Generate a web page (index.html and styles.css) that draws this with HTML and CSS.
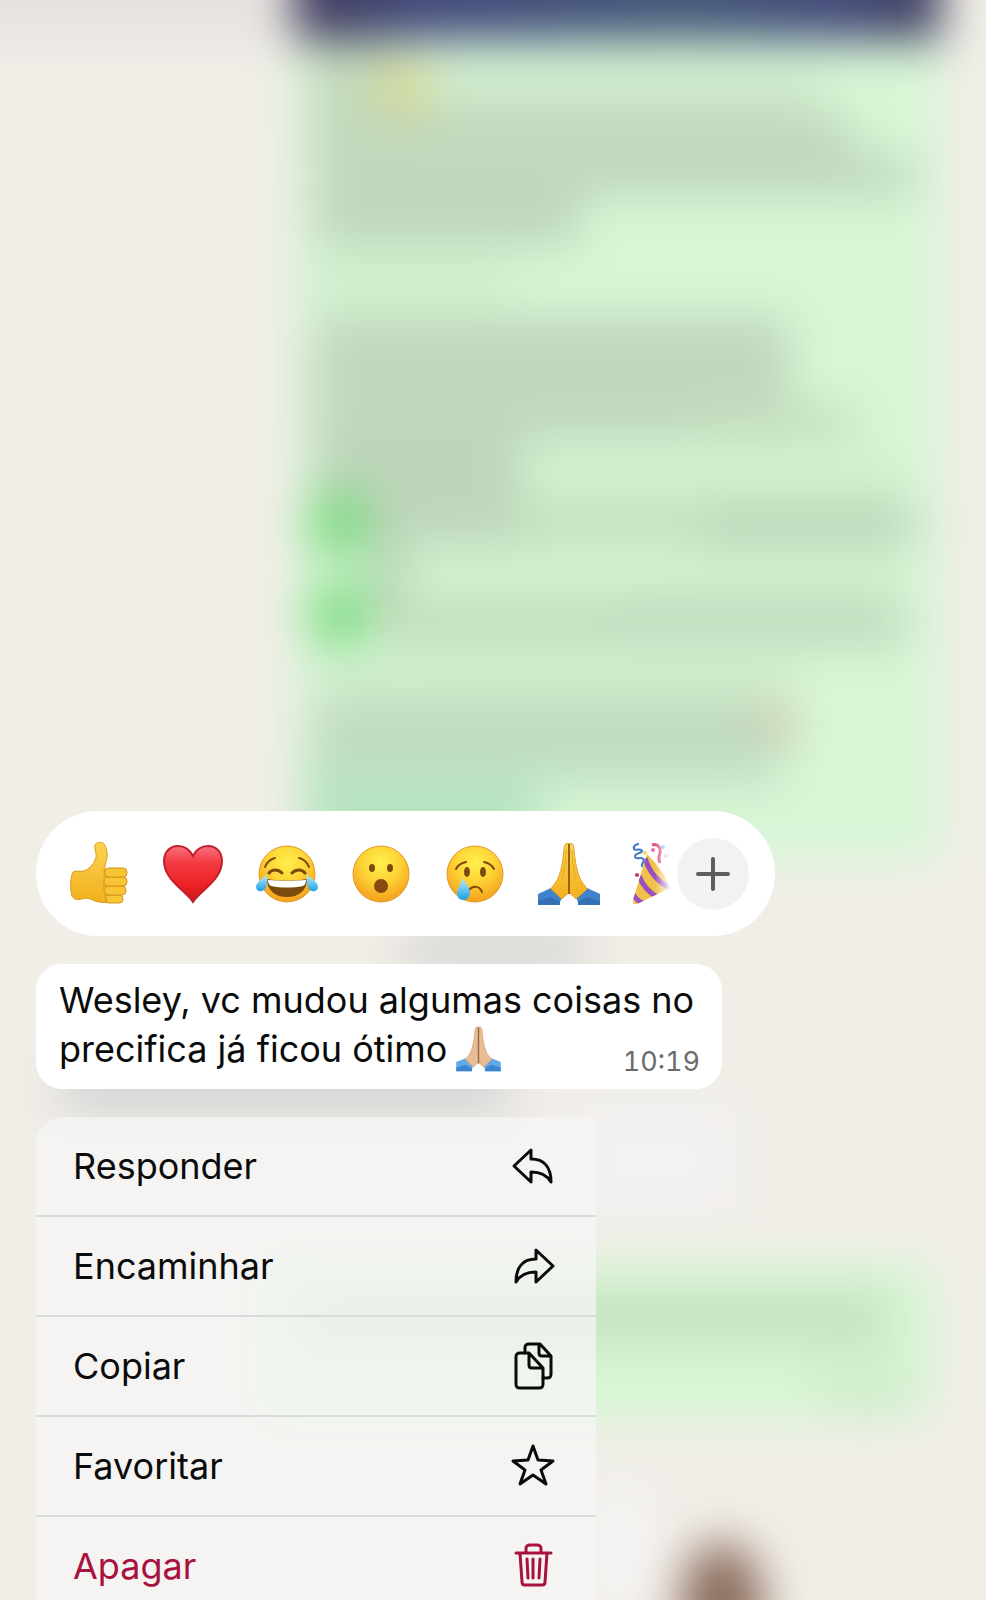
FILE: index.html
```html
<!DOCTYPE html>
<html lang="pt-BR">
  <head>
    <meta charset="utf-8">
    <meta name="viewport" content="width=device-width, initial-scale=1">
    <title>Conversa</title>
    <link rel="stylesheet" href="styles.css">
  </head>
  <body>
    <!-- blurred conversation behind the menu -->
    <svg class="backdrop" viewBox="0 0 986 1600" preserveAspectRatio="none" aria-hidden="true">
      <defs>
        <filter id="soft" filterUnits="userSpaceOnUse" x="-100" y="-100" width="1186" height="1800" color-interpolation-filters="sRGB"><feGaussianBlur stdDeviation="23"/></filter>
        <linearGradient id="photo" x1="0" x2="1" y1="0" y2="0">
          <stop offset="0" stop-color="#40385a"/>
          <stop offset=".2" stop-color="#434a7c"/>
          <stop offset=".6" stop-color="#44587a"/>
          <stop offset=".85" stop-color="#434a7a"/>
          <stop offset="1" stop-color="#403c5c"/>
        </linearGradient>
      </defs>
      <rect width="986" height="1600" fill="#f1eee8"/>
      <g filter="url(#soft)">
        <rect x="-100" y="-100" width="1186" height="1800" fill="#f1eee8"/>
        <rect x="-100" y="-100" width="390" height="140" fill="#e6e3df"/>
        <rect x="294" y="-100" width="650" height="962" rx="20" fill="#d8f6d6"/>
        <rect x="310" y="30" width="80" height="100" fill="#c4dabc"/>
        <rect x="400" y="80" width="420" height="36" fill="#cbe3c6"/>
        <rect x="314" y="116" width="540" height="50" fill="#c0d7bb"/>
        <rect x="314" y="155" width="600" height="42" fill="#c0d8bc"/>
        <rect x="314" y="190" width="266" height="56" fill="#bed6ba"/>
        <rect x="310" y="260" width="200" height="40" fill="#cfedcc"/>
        <rect x="314" y="316" width="476" height="90" fill="#c0d7bb"/>
        <rect x="316" y="395" width="434" height="44" fill="#bfd7bb"/>
        <rect x="700" y="405" width="155" height="34" fill="#c3dcbe"/>
        <rect x="314" y="425" width="205" height="84" fill="#bdd5b9"/>
        <rect x="520" y="450" width="380" height="50" fill="#d2f0cf"/>
        <rect x="370" y="500" width="160" height="44" fill="#bdd5b9"/>
        <rect x="520" y="504" width="200" height="36" fill="#c3dcbe"/>
        <rect x="700" y="502" width="215" height="44" fill="#bcd5b8"/>
        <rect x="420" y="552" width="480" height="40" fill="#d1efce"/>
        <rect x="370" y="540" width="36" height="70" fill="#b4d4b4"/>
        <rect x="380" y="602" width="230" height="42" fill="#c0dabb"/>
        <rect x="610" y="600" width="295" height="46" fill="#bfd8bb"/>
        <rect x="310" y="660" width="480" height="36" fill="#cfedcd"/>
        <rect x="314" y="700" width="480" height="54" fill="#c0d9bc"/>
        <rect x="306" y="750" width="470" height="36" fill="#c0e2c3"/>
        <rect x="306" y="780" width="230" height="70" fill="#b7e3c0"/>
        <rect x="294" y="-100" width="648" height="140" fill="url(#photo)"/>
        <rect x="310" y="494" width="58" height="60" fill="#7ed983"/>
        <rect x="310" y="586" width="58" height="58" fill="#7edc83"/>
        <circle cx="404" cy="88" r="26" fill="#dad58c"/>
        <circle cx="776" cy="724" r="22" fill="#d4ccb8"/>
        <rect x="400" y="930" width="190" height="40" rx="20" fill="#d5d4d2"/>
        <rect x="60" y="1056" width="450" height="56" fill="#d4d4d5"/>
        <rect x="580" y="1110" width="150" height="100" fill="#f2f1f3"/>
        <rect x="260" y="1262" width="674" height="158" rx="20" fill="#d6f6d3"/>
        <rect x="300" y="1292" width="590" height="54" fill="#c6e1c2"/>
        <rect x="820" y="1370" width="90" height="40" fill="#cfebca"/>
        <rect x="590" y="1490" width="60" height="110" fill="#f5f4f4"/>
        <ellipse cx="722" cy="1606" rx="42" ry="64" fill="#8b6c5c"/>
      </g>
    </svg>

    <main class="overlay">
      <section class="reactions" aria-label="Reações">
        <div class="reaction-list">
          <button type="button" aria-label="Gostei">
            <svg class="emoji" viewBox="0 0 64 64" aria-hidden="true">
              <defs>
                <linearGradient id="skin" x1="0" x2="0" y1="0" y2="1">
                  <stop offset="0" stop-color="#fcd34f"/>
                  <stop offset="1" stop-color="#f2b01e"/>
                </linearGradient>
              </defs>
              <path d="M33 0c-4 0-6 3-5 7 1 5 2 7 0 11-2 5-6 9-11 11-4 1-8-1-11 1-3 6-3 18-1 24 2 4 6 4 10 3 5-2 8 0 13 2 6 2 12 2 18 1l6-29-14-3c-1-5 3-10 2-18-1-6-3-10-7-10z" fill="url(#skin)" stroke="#dd9b20"/>
              <g fill="#f8c535" stroke="#d6921d">
                <rect x="38" y="53" width="18" height="8" rx="4"/>
                <rect x="37" y="44" width="22" height="9" rx="4"/>
                <rect x="37" y="35" width="23" height="9" rx="4"/>
                <rect x="38" y="26" width="22" height="9" rx="4"/>
              </g>
              <path d="M37 27c3 7-2 11 0 18 1 4 1 9 3 15" fill="none" stroke="#e6a526" stroke-width="2"/>
            </svg>
          </button>
          <button type="button" aria-label="Amei">
            <svg class="emoji" viewBox="0 0 64 64" aria-hidden="true">
              <defs>
                <linearGradient id="heart" x1="0" x2="0" y1="0" y2="1">
                  <stop offset="0" stop-color="#f97080"/>
                  <stop offset=".3" stop-color="#f33b42"/>
                  <stop offset=".7" stop-color="#ed2226"/>
                  <stop offset="1" stop-color="#c8161f"/>
                </linearGradient>
              </defs>
              <path d="M32 60C25 49 3 38 3 19 3 9 10 4 17 4c7 0 12 4 15 10 3-6 8-10 15-10 7 0 14 5 14 15 0 19-22 30-29 41z" fill="url(#heart)" stroke="#c01e2b" stroke-width="2"/>
            </svg>
          </button>
          <button type="button" aria-label="Rindo">
            <svg class="emoji" viewBox="0 0 64 64" aria-hidden="true">
              <defs>
                <radialGradient id="face" cx=".5" cy=".3" r=".7">
                  <stop offset="0" stop-color="#fff04d"/>
                  <stop offset=".5" stop-color="#fdd235"/>
                  <stop offset="1" stop-color="#f59f1c"/>
                </radialGradient>
                <linearGradient id="tear" x1="0" x2="0" y1="0" y2="1">
                  <stop offset="0" stop-color="#b7ecfb"/>
                  <stop offset="1" stop-color="#1f9fe6"/>
                </linearGradient>
              </defs>
              <circle cx="32" cy="32" r="28" fill="url(#face)" stroke="#dd982a"/>
              <path d="M10 25c2-5 6-8 10-9M44 16c5 1 8 4 10 9" fill="none" stroke="#7c4a0c" stroke-width="2" stroke-linecap="round"/>
              <path d="M14 31c3-4 9-4 13 0M37 31c4-4 10-4 13 0" fill="none" stroke="#7c4a0c" stroke-width="3" stroke-linecap="round"/>
              <path d="M12 37c12 2 28 2 40 0 0 12-9 18-20 18s-20-6-20-18z" fill="#7c4a0c"/>
              <path d="M13 38c12 1 26 1 38 0 0 3-1 5-3 6-10 2-22 2-32 0-2-1-3-3-3-6z" fill="#fff"/>
              <path d="M12 33C6 37 1 41 1 45c0 3 3 5 6 4 5-1 6-9 5-16zM52 33c6 4 11 8 11 12 0 3-3 5-6 4-5-1-6-9-5-16z" fill="url(#tear)"/>
            </svg>
          </button>
          <button type="button" aria-label="Surpresa">
            <svg class="emoji" viewBox="0 0 64 64" aria-hidden="true">
              <circle cx="32" cy="32" r="28" fill="url(#face)" stroke="#dd982a"/>
              <ellipse cx="23" cy="26" rx="3" ry="4" fill="#7c4a0c"/>
              <ellipse cx="41" cy="26" rx="3" ry="4" fill="#7c4a0c"/>
              <ellipse cx="32" cy="44" rx="7" ry="7" fill="#87490d"/>
            </svg>
          </button>
          <button type="button" aria-label="Triste">
            <svg class="emoji" viewBox="0 0 64 64" aria-hidden="true">
              <circle cx="32" cy="32" r="28" fill="url(#face)" stroke="#dd982a"/>
              <ellipse cx="24" cy="30" rx="3" ry="5" fill="#7c4a0c"/>
              <ellipse cx="40" cy="30" rx="3" ry="5" fill="#7c4a0c"/>
              <path d="M13 27c2-4 5-6 10-7M41 20c5 1 8 3 10 7M26 48c4-5 11-4 13 2" fill="none" stroke="#7c4a0c" stroke-width="2" stroke-linecap="round"/>
              <path d="M20 36c3 6 7 10 7 15 0 4-3 7-7 7s-6-3-6-7c0-5 4-9 6-15z" fill="url(#tear)"/>
            </svg>
          </button>
          <button type="button" aria-label="Obrigado">
            <svg class="emoji" viewBox="0 0 64 64" aria-hidden="true">
              <path d="M1 52l13-6 11 9-3 8H1zM63 52l-13-6-11 9 3 8h21z" fill="#3f83cd"/>
              <path d="M1 59l13-4 9 5v3H1zM63 59l-13-4-9 5v3h22z" fill="#356fb4"/>
              <path d="M32 2c-3-2-5 1-5 6-1 9-2 18-5 26-2 6-6 9-8 13l11 10c3-3 5-5 7-6 2 1 4 3 7 6l11-10c-2-4-6-7-8-13-3-8-4-17-5-26 0-5-2-8-5-6z" fill="url(#skin)" stroke="#e2a023"/>
              <path d="M32 2v50" stroke="#99610d" stroke-width="2"/>
              <path d="M29 8c0 12-2 22-4 29M35 8c0 12 2 22 4 29" fill="none" stroke="#e9a520"/>
            </svg>
          </button>
          <button type="button" aria-label="Festa">
            <svg class="emoji" viewBox="0 0 64 64" aria-hidden="true">
              <defs>
                <clipPath id="cone"><path d="M16 12c8 8 19 21 23 34L6 62c-3 1-5-1-4-4z"/></clipPath>
              </defs>
              <g clip-path="url(#cone)">
                <rect width="64" height="64" fill="#f0c24b"/>
                <path d="M14 16c4 14 14 26 28 31M8 34c4 10 10 17 20 22M2 52c2 4 6 8 12 10" fill="none" stroke="#9a4fc0" stroke-width="5"/>
              </g>
              <path d="M8 2c-3 0-6 2-5 5 1 2 7-1 8 2 1 2-8 2-7 6 1 3 8-1 9 3 0 2-3 3-2 7" fill="none" stroke="#3b76c9" stroke-width="2"/>
              <path d="M21 3c7-2 9 4 8 8-1 4-2 5 0 10" fill="none" stroke="#e0527e" stroke-width="3"/>
              <circle cx="32" cy="5" r="2" fill="#6bb0e6"/>
              <circle cx="35" cy="14" r="2" fill="#b8a5ee"/>
              <circle cx="6" cy="33" r="2" fill="#c93a55"/>
              <circle cx="14" cy="11" r="2" fill="#f4d95c"/>
              <circle cx="22" cy="8" r="2" fill="#ef6fa0"/>
              <circle cx="48" cy="24" r="2" fill="#e0527e"/>
            </svg>
          </button>
        </div>
        <button type="button" class="more" aria-label="Mais reações">
          <svg viewBox="0 0 72 72" aria-hidden="true">
            <path d="M36 21v30M21 36h30"/>
          </svg>
        </button>
      </section>

      <article class="message">
        <p>Wesley, vc mudou algumas coisas no</p>
        <div class="last-line">
          <p>precifica já ficou ótimo
            <svg class="pray" viewBox="0 0 64 64" role="img" aria-label="Mãos juntas">
              <path d="M1 50l13-5 11 9-3 9H1zM63 50l-13-5-11 9 3 9h21z" fill="#62a9ea"/>
              <path d="M1 58l13-4 9 5v4H1zM63 58l-13-4-9 5v4h22z" fill="#3c86d0"/>
              <path d="M32 2c-3-2-5 1-5 6-1 9-2 18-5 26-2 6-6 9-8 13l11 10c3-3 5-5 7-6 2 1 4 3 7 6l11-10c-2-4-6-7-8-13-3-8-4-17-5-26 0-5-2-8-5-6z" fill="#e9bd93" stroke="#d29f70"/>
              <path d="M32 2v50" stroke="#996a43" stroke-width="2"/>
            </svg>
          </p>
          <time datetime="10:19">10:19</time>
        </div>
      </article>

      <ul class="menu">
        <li>
          <button type="button">Responder
            <svg class="icon" viewBox="0 0 48 48" aria-hidden="true">
              <path d="M5 24L22 8v9c13 0 20 8 20 23-4-7-10-10-20-10v10z"/>
            </svg>
          </button>
        </li>
        <li>
          <button type="button">Encaminhar
            <svg class="icon" viewBox="0 0 48 48" aria-hidden="true">
              <path d="M44 24L27 8v9C14 17 7 25 7 40c4-7 10-10 20-10v10z"/>
            </svg>
          </button>
        </li>
        <li>
          <button type="button">Copiar
            <svg class="icon" viewBox="0 0 48 48" aria-hidden="true">
              <path d="M20 11H11c-3 0-4 1-4 4v27c0 3 1 4 4 4h19c3 0 4-1 4-4V26L20 11zM20 11v12c0 2 1 3 3 3h11"/>
              <path d="M16 11V6c0-3 1-4 4-4h11l11 12v18c0 3-1 4-4 4h-4M30 2v9c0 2 1 3 3 3h9"/>
            </svg>
          </button>
        </li>
        <li>
          <button type="button">Favoritar
            <svg class="icon" viewBox="0 0 48 48" aria-hidden="true">
              <path d="M24 4l5 14 15 1-12 9 5 14-13-9-13 9 5-14-12-9 15-1z"/>
            </svg>
          </button>
        </li>
        <li>
          <button type="button" class="danger">Apagar
            <svg class="icon" viewBox="0 0 48 48" aria-hidden="true">
              <path d="M7 11h35M17 11V7c0-3 1-4 4-4h7c3 0 4 1 4 4v4M11 11l2 29c0 2 1 3 3 3h17c2 0 3-1 3-3l2-29M18 17l1 19M24 17v19M31 17l-1 19"/>
            </svg>
          </button>
        </li>
      </ul>
    </main>
  </body>
</html>
```

FILE: styles.css
```css
* {
    box-sizing: border-box;
}
body {
    background: #f1eee8;
    color: #0b0b0b;
    font-family: Inter, "Liberation Sans", sans-serif;
    font-size: 36px;
    height: 100vh;
    margin: 0;
    overflow: hidden;
}
button {
    background: none;
    border: 0;
    color: inherit;
    cursor: pointer;
    font: inherit;
    padding: 0;
}
svg {
    display: block;
}

.backdrop {
    height: 100%;
    left: 0;
    position: absolute;
    top: 0;
    width: 100%;
}
.overlay {
    align-items: flex-start;
    display: flex;
    flex-direction: column;
    gap: 28px;
    height: 100%;
    justify-content: flex-end;
    padding: 0 36px;
    position: relative;
}

/* reactions */
.reactions {
    align-items: center;
    background: #fff;
    border-radius: 62px;
    display: flex;
    flex: none;
    gap: 6px;
    height: 125px;
    max-width: 100%;
    padding: 0 26px 0 31px;
    width: 739px;
}
.reaction-list {
    display: flex;
    flex: 1;
    gap: 30px;
    -webkit-mask-image: linear-gradient(to left, transparent, #000 16px);
    mask-image: linear-gradient(to left, transparent, #000 16px);
    overflow: hidden;
}
.reaction-list button {
    flex: none;
}
.emoji {
    height: 64px;
    width: 64px;
}
.more {
    background: #f2f2f2;
    border-radius: 50%;
    flex: none;
    height: 72px;
    width: 72px;
}
.more path {
    stroke: #5e5e5e;
    stroke-linecap: round;
    stroke-width: 4;
}

/* message */
.message {
    background: #fff;
    border-radius: 26px;
    flex: none;
    max-width: 100%;
    padding: 12px 22px 15px 23px;
    width: 686px;
}
.message p {
    line-height: 49px;
    margin: 0;
}
.last-line {
    align-items: flex-end;
    display: flex;
    height: 49px;
    justify-content: space-between;
}
.message time {
    color: #6b6b6b;
    font-size: 27px;
    font-variant-numeric: tabular-nums;
    line-height: 24px;
}
.pray {
    display: inline-block;
    height: 46px;
    margin-left: -3px;
    vertical-align: -10px;
    width: 47px;
}

/* context menu, runs off the bottom edge */
.menu {
    background: rgba(246, 246, 245, .74);
    border-radius: 28px 0 0 0;
    flex: none;
    list-style: none;
    margin: 0 0 -17px;
    max-width: 100%;
    padding: 0;
    width: 560px;
}
.menu li {
    border-bottom: 2px solid #d9dbda;
}
.menu button {
    align-items: center;
    display: flex;
    height: 98px;
    justify-content: space-between;
    padding: 0 39px 0 37px;
    width: 100%;
}
.icon {
    fill: none;
    height: 48px;
    stroke: currentColor;
    stroke-linecap: round;
    stroke-linejoin: round;
    stroke-width: 3;
    width: 48px;
}
.danger {
    color: #a8123e;
}
```
